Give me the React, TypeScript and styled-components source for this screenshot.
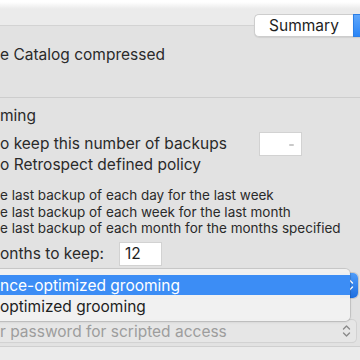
import React from 'react';
import styled, { createGlobalStyle } from 'styled-components';

const GlobalStyle = createGlobalStyle`
  html, body {
    margin: 0;
    padding: 0;
    width: 360px;
    height: 360px;
    overflow: hidden;
    background: #ececec;
  }
  body {
    font-family: Inter, "Liberation Sans", sans-serif;
    color: #2a2a2a;
    -webkit-font-smoothing: antialiased;
  }
`;

const Window = styled.div`
  width: 360px;
  height: 360px;
  overflow: hidden;
  display: flex;
  flex-direction: column;
  background: linear-gradient(#ffffff 0, #ffffff 2px, #ebebeb 9px, #ebebeb 100%);
`;

const TabStrip = styled.div`
  position: relative;
  z-index: 1;
  display: flex;
  justify-content: flex-end;
  margin: 14px 0 -12px 0;
`;

const Tab = styled.div<{ $selected?: boolean; $width: number }>`
  width: ${p => p.$width}px;
  height: 23px;
  box-sizing: border-box;
  display: flex;
  align-items: center;
  justify-content: center;
  font-size: 15.5px;
  color: ${p => (p.$selected ? '#ffffff' : '#1e1e1e')};
  background: ${p => (p.$selected ? 'linear-gradient(#5fa7fb, #2a85f6)' : '#ffffff')};
  border: 1px solid ${p => (p.$selected ? '#2c7fe6' : '#cdcdcd')};
  border-right: none;
  &:first-child {
    border-radius: 5px 0 0 5px;
  }
  box-shadow: 0 1px 1px rgba(0, 0, 0, 0.08);
`;

const TabBox = styled.div`
  border-top: 1px solid #d3d3d3;
  border-bottom: 1px solid #cfcfcf;
  background: #e2e2e2;
  height: 322px;
  box-sizing: border-box;
  position: relative;
  display: flex;
  flex-direction: column;
`;

const Text = styled.div<{ $small?: boolean; $top?: number }>`
  font-size: ${p => (p.$small ? '13.5px' : '15.5px')};
  line-height: ${p => (p.$small ? '16.5px' : '18px')};
  margin-top: ${p => p.$top ?? 0}px;
  white-space: nowrap;
`;

const Separator = styled.div`
  height: 1px;
  background: #cdcdcd;
  margin: 33px 0 0 -10px;
`;

const FieldRow = styled.div<{ $top: number; $gap: number }>`
  display: flex;
  align-items: center;
  gap: ${p => p.$gap}px;
  margin-top: ${p => p.$top}px;
`;

const NumberField = styled.div<{ $width: number }>`
  width: ${p => p.$width}px;
  height: 24px;
  box-sizing: border-box;
  background: #ffffff;
  border: 1px solid #d2d2d2;
  display: flex;
  align-items: center;
  justify-content: flex-end;
  padding: 0 7px 0 5px;
  font-size: 15.5px;
  color: #1e1e1e;
`;

const NumberValue = styled.span`
  margin-right: auto;
`;

const Dash = styled.span`
  width: 5px;
  height: 2px;
  border-radius: 1px;
  background: #c9c9c9;
  margin-top: 2px;
`;

const PopupRow = styled.div`
  display: flex;
  justify-content: flex-end;
  margin: 7px 2px 0 0;
`;

const PopupButton = styled.div`
  width: 220px;
  height: 25px;
  display: flex;
  border-radius: 5px;
  background: #ffffff;
  box-shadow: 0 0 0 1px #c8c8c8;
`;

const PopupCap = styled.div`
  margin-left: auto;
  width: 18px;
  border-radius: 0 5px 5px 0;
  background: linear-gradient(#4f9cf9, #1d6fe0);
  display: flex;
  align-items: center;
  justify-content: center;
`;

const ComboBox = styled.div`
  margin: 22px 4px 0 -10px;
  height: 22px;
  display: flex;
  align-items: flex-start;
  border-radius: 4px;
  background: #e6e6e6;
  box-shadow: 0 0 0 1px #d2d2d2, 0 1px 1px rgba(0, 0, 0, 0.06);
  padding: 0 5px 0 10px;
  box-sizing: border-box;
  font-size: 15.5px;
  color: #9d9d9d;
  white-space: nowrap;
`;

const ComboText = styled.span`
  line-height: 18px;
  margin-top: 3px;
`;

const ComboArrows = styled.span`
  margin: 4px 0 0 auto;
  display: flex;
`;

const Menu = styled.div`
  position: absolute;
  left: -20px;
  top: 243px;
  width: 370px;
  padding: 6px 0 5px;
  border-radius: 5px;
  background: rgba(241, 241, 241, 0.98);
  box-shadow: 0 0 0 1px rgba(0, 0, 0, 0.1), 0 1px 3px rgba(0, 0, 0, 0.12);
`;

const MenuItem = styled.div<{ $active?: boolean }>`
  height: 20px;
  display: flex;
  align-items: center;
  padding-left: 20px;
  font-size: 15.5px;
  white-space: nowrap;
  color: ${p => (p.$active ? '#ffffff' : '#1e1e1e')};
  background: ${p => (p.$active ? '#3c8df5' : 'transparent')};
  & + & {
    margin-top: 1px;
  }
`;

const Chevrons = ({ color }: { color: string }) => (
  <svg width="9" height="14" viewBox="0 0 9 14" fill="none" stroke={color} strokeWidth="1.4" strokeLinecap="round" strokeLinejoin="round">
    <path d="M1.5 5 L4.5 2 L7.5 5" />
    <path d="M1.5 9 L4.5 12 L7.5 9" />
  </svg>
);

const App: React.FC = () => {
  return (
    <>
      <GlobalStyle />
      <Window>
        <TabStrip>
          <Tab $width={99}>Summary</Tab>
          <Tab $width={7} $selected />
        </TabStrip>
        <TabBox>
          <Text $top={20}>e Catalog compressed</Text>
          <Separator />
          <Text $top={9}>ming</Text>
          <FieldRow $top={7} $gap={32}>
            <Text>o keep this number of backups</Text>
            <NumberField $width={43}>
              <Dash />
            </NumberField>
          </FieldRow>
          <Text $top={0}>o Retrospect defined policy</Text>
          <Text $small $top={13}>e last backup of each day for the last week</Text>
          <Text $small>e last backup of each week for the last month</Text>
          <Text $small>e last backup of each month for the months specified</Text>
          <FieldRow $top={5} $gap={15}>
            <Text>onths to keep:</Text>
            <NumberField $width={43}>
              <NumberValue>12</NumberValue>
            </NumberField>
          </FieldRow>
          <PopupRow>
            <PopupButton>
              <PopupCap>
                <Chevrons color="#ffffff" />
              </PopupCap>
            </PopupButton>
          </PopupRow>
          <ComboBox>
            <ComboText>r password for scripted access</ComboText>
            <ComboArrows>
              <Chevrons color="#8a8a8a" />
            </ComboArrows>
          </ComboBox>
          <Menu>
            <MenuItem $active>nce-optimized grooming</MenuItem>
            <MenuItem>optimized grooming</MenuItem>
          </Menu>
        </TabBox>
      </Window>
    </>
  );
};

export default App;
